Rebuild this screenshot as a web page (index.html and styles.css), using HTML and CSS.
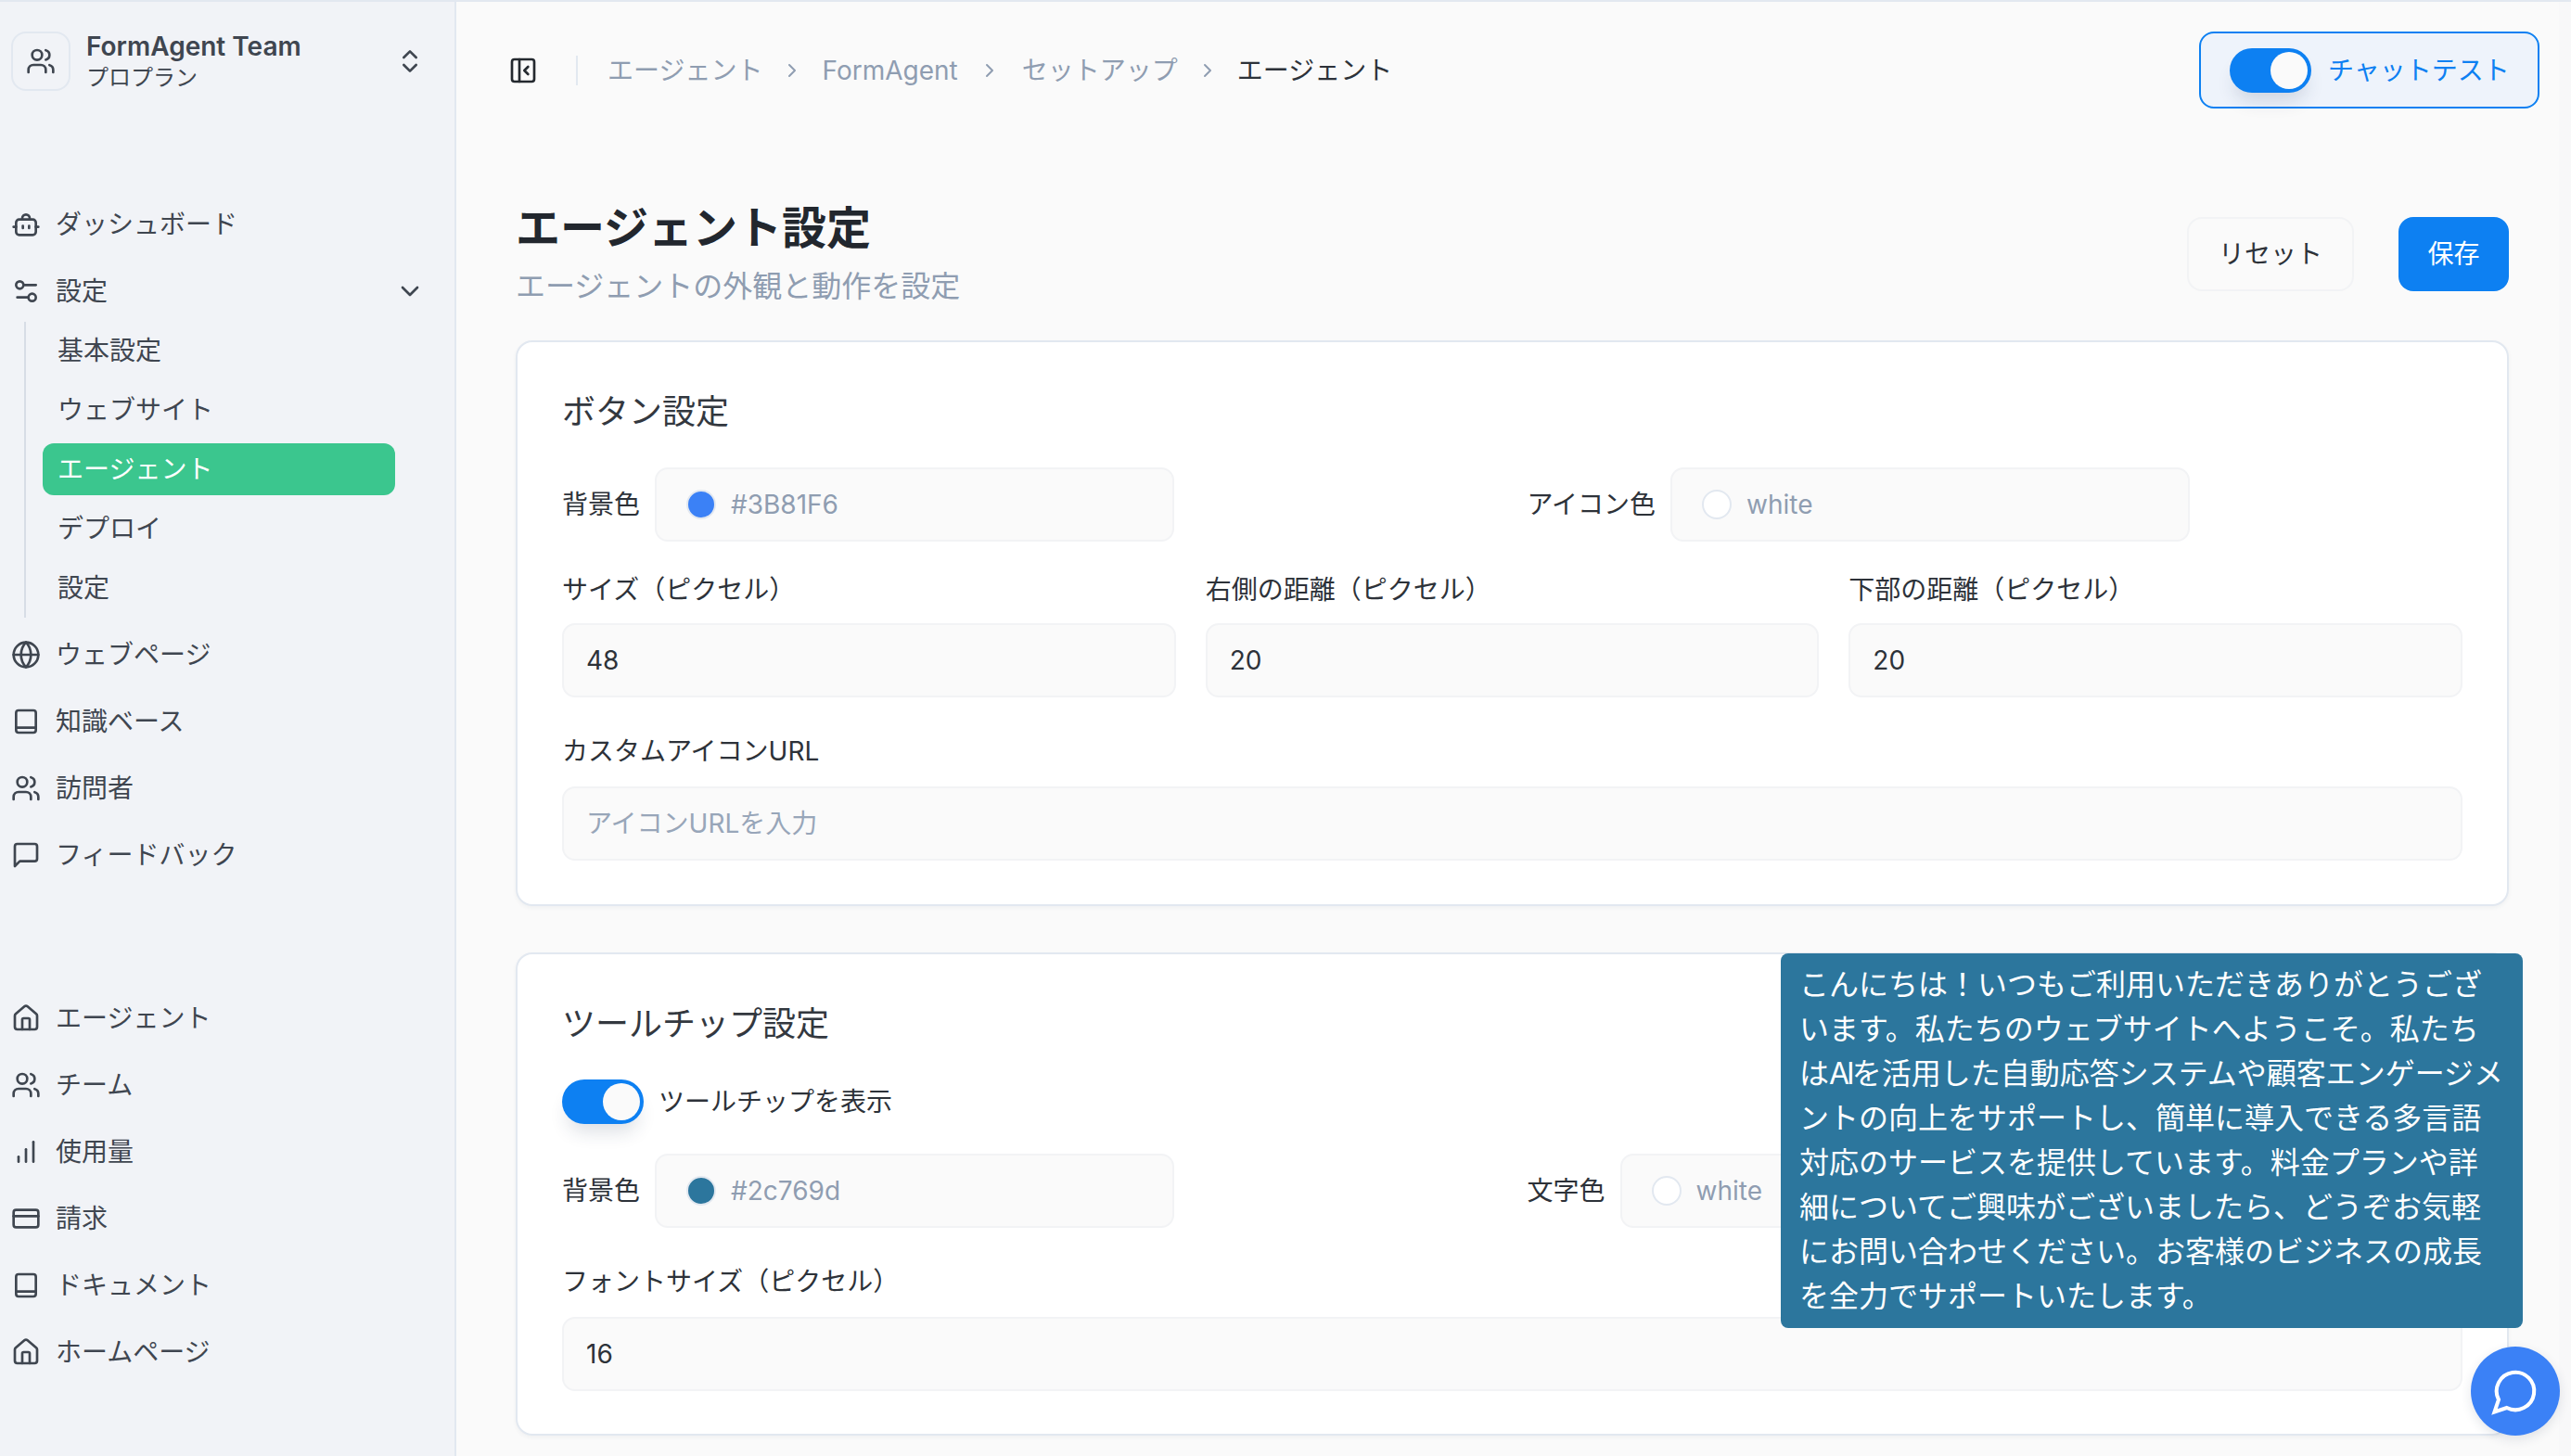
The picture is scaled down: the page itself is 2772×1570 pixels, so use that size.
FILE: index.html
```html
<!DOCTYPE html>
<html lang="ja">
<head>
<meta charset="utf-8">
<title>エージェント設定</title>
<link rel="stylesheet" href="styles.css">
</head>
<body>
<svg class="sprite" aria-hidden="true">
  <symbol id="i-users" viewBox="0 0 24 24"><path d="M16 21v-2a4 4 0 0 0-4-4H6a4 4 0 0 0-4 4v2"/><circle cx="9" cy="7" r="4"/><path d="M22 21v-2a4 4 0 0 0-3-3.87"/><path d="M16 3.13a4 4 0 0 1 0 7.75"/></symbol>
  <symbol id="i-bot" viewBox="0 0 24 24"><rect x="4" y="8" width="16" height="12.5" rx="2.5"/><path d="M9 8V7a3 3 0 0 1 6 0v1"/><path d="M2 14h2"/><path d="M20 14h2"/><path d="M9.5 13.2v1.8"/><path d="M14.5 13.2v1.8"/></symbol>
  <symbol id="i-sliders" viewBox="0 0 24 24"><path d="M20 7h-9"/><path d="M14 17H5"/><circle cx="17" cy="17" r="3"/><circle cx="7" cy="7" r="3"/></symbol>
  <symbol id="i-globe" viewBox="0 0 24 24"><circle cx="12" cy="12" r="10"/><path d="M12 2a14.5 14.5 0 0 0 0 20 14.5 14.5 0 0 0 0-20"/><path d="M2 12h20"/></symbol>
  <symbol id="i-book" viewBox="0 0 24 24"><rect x="4" y="3" width="16" height="18" rx="2"/><path d="M4 17h16"/></symbol>
  <symbol id="i-chat" viewBox="0 0 24 24"><path d="M21 15a2 2 0 0 1-2 2H7l-4 4V5a2 2 0 0 1 2-2h14a2 2 0 0 1 2 2z"/></symbol>
  <symbol id="i-home" viewBox="0 0 24 24"><path d="M15 21v-8a1 1 0 0 0-1-1h-4a1 1 0 0 0-1 1v8"/><path d="M3 10a2 2 0 0 1 .709-1.528l7-5.999a2 2 0 0 1 2.582 0l7 5.999A2 2 0 0 1 21 10v9a2 2 0 0 1-2 2H5a2 2 0 0 1-2-2z"/></symbol>
  <symbol id="i-chart" viewBox="0 0 24 24"><path d="M12 20V10"/><path d="M18 20V4"/><path d="M6 20v-4"/></symbol>
  <symbol id="i-card" viewBox="0 0 24 24"><rect x="2" y="5" width="20" height="14" rx="2"/><path d="M2 10h20"/></symbol>
  <symbol id="i-right" viewBox="0 0 24 24"><path d="m9 18 6-6-6-6"/></symbol>
</svg>

<div class="app">
  <aside class="sidebar">
    <div class="team">
      <span class="team-logo"><svg class="icon"><use href="#i-users"/></svg></span>
      <span class="team-text">
        <span class="team-name">FormAgent Team</span>
        <span class="team-plan">プロプラン</span>
      </span>
      <svg class="icon" viewBox="0 0 24 24"><path d="m7 15 5 5 5-5"/><path d="m7 9 5-5 5 5"/></svg>
    </div>

    <nav class="nav nav-top">
      <a class="nav-item"><svg class="icon"><use href="#i-bot"/></svg><span>ダッシュボード</span></a>
      <a class="nav-item nav-parent"><svg class="icon"><use href="#i-sliders"/></svg><span>設定</span><svg class="icon caret" viewBox="0 0 24 24"><path d="m6 9 6 6 6-6"/></svg></a>
      <div class="subnav">
        <a class="sub-item">基本設定</a>
        <a class="sub-item">ウェブサイト</a>
        <a class="sub-item active">エージェント</a>
        <a class="sub-item">デプロイ</a>
        <a class="sub-item">設定</a>
      </div>
      <a class="nav-item"><svg class="icon"><use href="#i-globe"/></svg><span>ウェブページ</span></a>
      <a class="nav-item"><svg class="icon"><use href="#i-book"/></svg><span>知識ベース</span></a>
      <a class="nav-item"><svg class="icon"><use href="#i-users"/></svg><span>訪問者</span></a>
      <a class="nav-item"><svg class="icon"><use href="#i-chat"/></svg><span>フィードバック</span></a>
    </nav>

    <nav class="nav nav-bottom">
      <a class="nav-item"><svg class="icon"><use href="#i-home"/></svg><span>エージェント</span></a>
      <a class="nav-item"><svg class="icon"><use href="#i-users"/></svg><span>チーム</span></a>
      <a class="nav-item"><svg class="icon"><use href="#i-chart"/></svg><span>使用量</span></a>
      <a class="nav-item"><svg class="icon"><use href="#i-card"/></svg><span>請求</span></a>
      <a class="nav-item"><svg class="icon"><use href="#i-book"/></svg><span>ドキュメント</span></a>
      <a class="nav-item"><svg class="icon"><use href="#i-home"/></svg><span>ホームページ</span></a>
    </nav>
  </aside>

  <main class="main">
    <header class="topbar">
      <svg class="icon toggle-icon" viewBox="0 0 24 24"><rect x="3" y="3" width="18" height="18" rx="2"/><path d="M9 3v18"/><path d="m16 15-3-3 3-3"/></svg>
      <span class="divider"></span>
      <div class="crumbs">
        <span class="crumb">エージェント</span>
        <svg class="icon crumb-sep"><use href="#i-right"/></svg>
        <span class="crumb crumb-latin">FormAgent</span>
        <svg class="icon crumb-sep"><use href="#i-right"/></svg>
        <span class="crumb crumb-after">セットアップ</span>
        <svg class="icon crumb-sep"><use href="#i-right"/></svg>
        <span class="crumb current">エージェント</span>
      </div>
      <div class="chat-test">
        <span class="switch"><span class="knob"></span></span>
        <span>チャットテスト</span>
      </div>
    </header>

    <section class="page-head">
      <div>
        <h1>エージェント設定</h1>
        <p>エージェントの外観と動作を設定</p>
      </div>
      <div class="actions">
        <button class="btn btn-ghost" type="button">リセット</button>
        <button class="btn btn-primary" type="button">保存</button>
      </div>
    </section>

    <section class="card">
      <h2>ボタン設定</h2>
      <div class="two-col">
        <div class="color-field">
          <label>背景色</label>
          <div class="input color-input"><span class="swatch swatch-blue"></span><span class="muted">#3B81F6</span></div>
        </div>
        <div class="color-field">
          <label>アイコン色</label>
          <div class="input color-input"><span class="swatch"></span><span class="muted">white</span></div>
        </div>
      </div>
      <div class="three-col">
        <div class="field"><label>サイズ（ピクセル）</label><div class="input">48</div></div>
        <div class="field"><label>右側の距離（ピクセル）</label><div class="input">20</div></div>
        <div class="field"><label>下部の距離（ピクセル）</label><div class="input">20</div></div>
      </div>
      <div class="field field-wide"><label>カスタムアイコンURL</label><div class="input placeholder">アイコンURLを入力</div></div>
    </section>

    <section class="card card-second">
      <h2>ツールチップ設定</h2>
      <div class="switch-row">
        <span class="switch"><span class="knob"></span></span>
        <span>ツールチップを表示</span>
      </div>
      <div class="two-col">
        <div class="color-field">
          <label>背景色</label>
          <div class="input color-input"><span class="swatch swatch-teal"></span><span class="muted">#2c769d</span></div>
        </div>
        <div class="color-field">
          <label>文字色</label>
          <div class="input color-input"><span class="swatch"></span><span class="muted">white</span></div>
        </div>
      </div>
      <div class="field field-wide"><label>フォントサイズ（ピクセル）</label><div class="input">16</div></div>
    </section>
  </main>
</div>

<div class="tooltip">こんにちは！いつもご利用いただきありがとうござ<br>います。私たちのウェブサイトへようこそ。私たち<br>は<span class="tight">AI</span>を活用した自動応答システムや顧客エンゲージメ<br>ントの向上をサポートし、簡単に導入できる多言語<br>対応のサービスを提供しています。料金プランや詳<br>細についてご興味がございましたら、どうぞお気軽<br>にお問い合わせください。お客様のビジネスの成長<br>を全力でサポートいたします。</div>
<button class="chat-bubble" type="button" aria-label="チャット">
  <svg class="bubble-icon" viewBox="0 0 24 24"><path d="M7.9 20A9 9 0 1 0 4 16.1L2 22Z"/></svg>
</button>
</body>
</html>
```

FILE: styles.css
```css
* { box-sizing: border-box; }
html, body { margin: 0; padding: 0; }
body {
  width: 2772px;
  height: 1570px;
  overflow: hidden;
  position: relative;
  background: #f8f8f9;
  color: #2d3239;
  font-family: Inter, "Noto Sans CJK JP", sans-serif;
  font-size: 28px;
  font-weight: 400;
  line-height: 40px;
  border-top: 2px solid #e2e8f0;
}
.sprite { display: none; }

.icon {
  width: 32px;
  height: 32px;
  flex: none;
  fill: none;
  stroke: #3f4650;
  stroke-width: 2;
  stroke-linecap: round;
  stroke-linejoin: round;
}

.app { display: flex; height: 1568px; }

/* Sidebar */
.sidebar {
  width: 492px;
  flex: none;
  background: #f1f3f7;
  border-right: 2px solid #e2e8f0;
  padding: 32px 32px 0 12px;
}
.team { display: flex; align-items: center; height: 64px; }
.team-logo {
  width: 64px;
  height: 64px;
  flex: none;
  display: flex;
  align-items: center;
  justify-content: center;
  border: 2px solid #e2e8f0;
  border-radius: 16px;
}
.team-text { flex: 1; display: flex; flex-direction: column; margin-left: 17px; color: #3f4650; }
.team-name { font-weight: 600; font-size: 28px; line-height: 32px; }
.team-plan { font-size: 24px; line-height: 32px; margin-top: 2px; margin-bottom: -2px; }

.nav { display: flex; flex-direction: column; gap: 16px; }
.nav-top { margin-top: 116px; }
.nav-bottom { margin-top: 120px; }
.nav-item {
  display: flex;
  align-items: center;
  gap: 16px;
  height: 56px;
  color: #3f4650;
}
.nav-item span { flex: 1; }
.subnav {
  display: flex;
  flex-direction: column;
  gap: 8px;
  margin: -11px 0 -4px 14px;
  padding: 3px 0 4px 18px;
  border-left: 2px solid #d7dde6;
}
.sub-item {
  display: flex;
  align-items: center;
  height: 56px;
  width: 380px;
  padding-left: 16px;
  border-radius: 12px;
  color: #3f4650;
}
.sub-item.active { background: #3bc68e; color: #fff; }

/* Main */
.main { flex: 1; min-width: 0; padding: 0 54px 0 64px; background: #fafafa; margin-right: 13px; position: relative; }

.topbar {
  display: flex;
  align-items: center;
  height: 83px;
  margin-top: 32px;
  margin-left: -8px;
  margin-right: -33px;
}
.toggle-icon { stroke: #24292f; }
.divider { width: 2px; height: 32px; background: #e2e8f0; margin: 0 32px 0 41px; }
.crumbs { display: flex; align-items: center; gap: 20px; flex: 1; color: #8f9db1; }
.crumb-sep { width: 24px; height: 24px; stroke: #8f9db1; }
.crumb-latin { margin-right: 2px; }
.crumb-after { margin-left: 3px; }
.crumb.current { color: #2d3239; }
.chat-test {
  display: flex;
  align-items: center;
  gap: 18px;
  width: 367px;
  height: 83px;
  padding-left: 31px;
  border: 2px solid #0d80f2;
  border-radius: 16px;
  background: #eef3fb;
  color: #0d80f2;
}
.switch {
  display: block;
  position: relative;
  width: 88px;
  height: 48px;
  flex: none;
  border-radius: 24px;
  background: #0d80f2;
  box-shadow: 0 14px 20px -6px rgba(30, 50, 80, .16);
}
.knob {
  position: absolute;
  top: 4px;
  right: 4px;
  width: 40px;
  height: 40px;
  border-radius: 50%;
  background: #fafafa;
}

.page-head {
  display: flex;
  justify-content: space-between;
  align-items: flex-start;
  margin-top: 97px;
  height: 153px;
}
h1 { margin: 0; font-size: 48px; line-height: 64px; font-weight: 700; color: #22272e; }
.page-head p { margin: 7px 0 0; font-size: 32px; line-height: 48px; color: #8f9db1; }
.actions { display: flex; gap: 48px; margin-top: 20px; }
.btn {
  height: 80px;
  font: inherit;
  border-radius: 16px;
  cursor: pointer;
}
.btn-ghost { width: 180px; background: #fafafa; border: 2px solid #f2f3f5; color: #2d3239; }
.btn-primary { width: 119px; background: #0d80f2; border: none; color: #fff; }

.card {
  background: #fff;
  border: 2px solid #e2e8f0;
  border-radius: 18px;
  box-shadow: 0 2px 4px rgba(30, 50, 80, .05);
  padding: 48px;
  height: 610px;
}
.card-second { margin-top: 50px; height: 521px; }
h2 { margin: 2px 0 35px; font-size: 36px; line-height: 50px; font-weight: 400; color: #33383f; }

.two-col { display: grid; grid-template-columns: 1fr 1fr; gap: 32px; }
.three-col { display: grid; grid-template-columns: repeat(3, 1fr); gap: 32px; margin-top: 32px; }
.color-field { display: flex; align-items: center; gap: 16px; }
.field label { display: block; margin-bottom: 16px; }
.field-wide { margin-top: 38px; }
.field-wide label { margin-bottom: 18px; }
.input {
  display: flex;
  align-items: center;
  height: 80px;
  padding: 0 24px;
  background: #fafafa;
  border: 2px solid #f2f3f5;
  border-radius: 14px;
  color: #2d3239;
}
.color-input { width: 560px; flex: none; padding: 0 32px; gap: 16px; }
.swatch {
  width: 32px;
  height: 32px;
  flex: none;
  border-radius: 50%;
  background: #fff;
  border: 2px solid #e2e8f0;
}
.swatch-blue { background: #3b81f6; }
.swatch-teal { background: #2c769d; }
.muted { color: #8f9db1; }
.input.placeholder { color: #98a6b9; }

.switch-row { display: flex; align-items: center; gap: 16px; height: 48px; margin: 0 0 32px; }

/* Overlays */
.tooltip {
  position: absolute;
  left: 1920px;
  top: 1026px;
  width: 800px;
  height: 404px;
  padding: 10px 20px;
  background: #2c769d;
  border-radius: 8px;
  color: #fff;
  font-size: 32px;
  line-height: 48px;
  white-space: nowrap;
}
.tight { letter-spacing: -3px; }
.chat-bubble {
  position: absolute;
  left: 2664px;
  top: 1450px;
  width: 96px;
  height: 96px;
  padding: 0;
  display: flex;
  align-items: center;
  justify-content: center;
  border: none;
  border-radius: 50%;
  background: #3b81f6;
  box-shadow: 0 4px 12px rgba(30, 50, 80, .12);
}
.bubble-icon {
  width: 54px;
  height: 54px;
  fill: none;
  stroke: #fff;
  stroke-width: 1.8;
  stroke-linecap: round;
  stroke-linejoin: miter;
}
```
